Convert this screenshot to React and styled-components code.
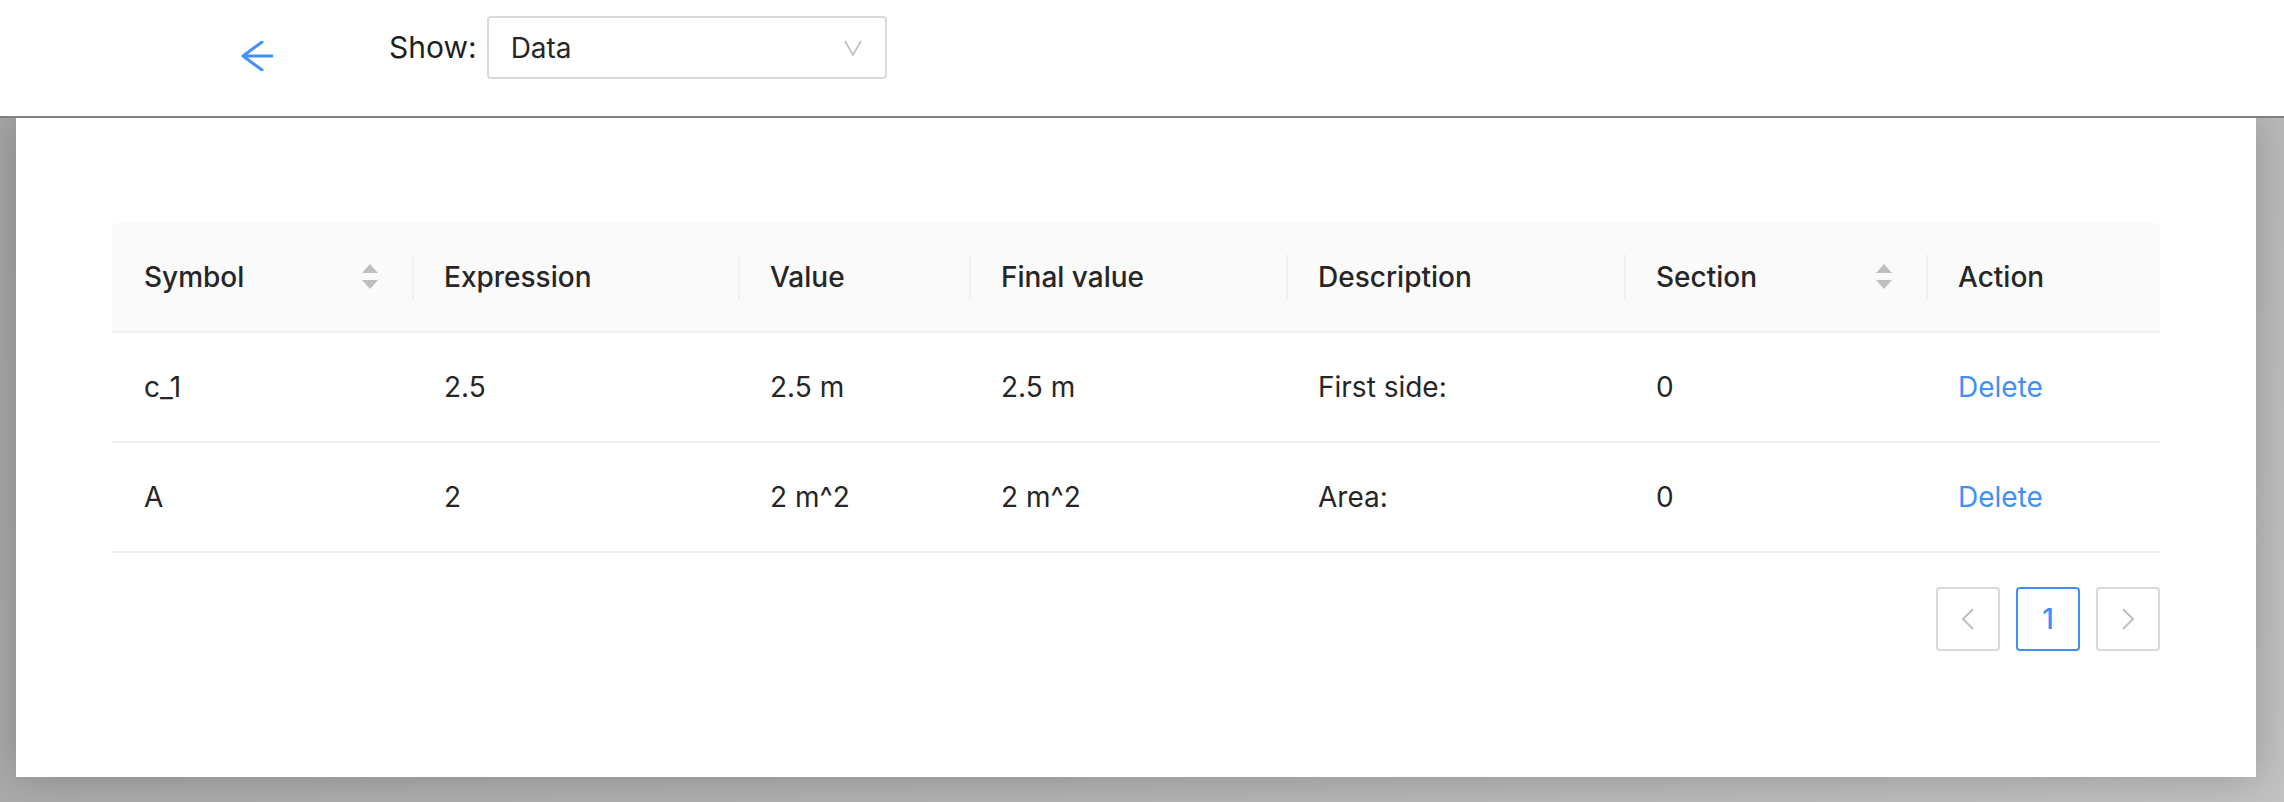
import React from "react";
import styled, { createGlobalStyle } from "styled-components";

const GlobalStyle = createGlobalStyle`
  html, body {
    margin: 0;
    padding: 0;
    height: 100%;
  }

  body {
    font-family: Inter, "Noto Sans", "Liberation Sans", sans-serif;
    color: #262626;
    background: #c4c4c4;
  }

  #root {
    height: 100%;
  }
`;

const BLUE = "#4090f7";

const columns = [
  { key: "symbol", title: "Symbol", width: 300, sortable: true },
  { key: "expression", title: "Expression", width: 326 },
  { key: "value", title: "Value", width: 231 },
  { key: "finalValue", title: "Final value", width: 317 },
  { key: "description", title: "Description", width: 338 },
  { key: "section", title: "Section", width: 302, sortable: true },
  { key: "action", title: "Action", width: 234 },
];

const rows = [
  { symbol: "c_1", expression: "2.5", value: "2.5 m", finalValue: "2.5 m", description: "First side:", section: "0" },
  { symbol: "A", expression: "2", value: "2 m^2", finalValue: "2 m^2", description: "Area:", section: "0" },
];

const ArrowLeft = () => (
  <svg width="32" height="30" viewBox="0 0 32 30" fill="none">
    <path
      d="M31 15H2M21 1L2 15L21 29"
      stroke={BLUE}
      strokeWidth="3"
      strokeLinecap="round"
      strokeLinejoin="round"
    />
  </svg>
);

const ChevronDown = () => (
  <svg width="18" height="16" viewBox="0 0 18 16" fill="none">
    <path d="M1 1L9 15L17 1" stroke="#bfbfbf" strokeWidth="1.6" />
  </svg>
);

const Chevron = ({ dir }) => (
  <svg width="14" height="22" viewBox="0 0 14 22" fill="none">
    <path
      d={dir === "left" ? "M12 1L2 11L12 21" : "M2 1L12 11L2 21"}
      stroke="#bfbfbf"
      strokeWidth="2"
    />
  </svg>
);

const SortCarets = () => (
  <SortIcon viewBox="0 0 16 26" width="16" height="26">
    <path d="M8 0L16 9H0Z" fill="#bfbfbf" />
    <path d="M0 16H16L8 25Z" fill="#bfbfbf" />
  </SortIcon>
);

const App = () => {
  return (
    <>
      <GlobalStyle />
      <Page>
        <Header>
          <BackButton type="button" aria-label="Back">
            <ArrowLeft />
          </BackButton>
          <ShowLabel>Show:</ShowLabel>
          <Select>
            <span>Data</span>
            <ChevronDown />
          </Select>
        </Header>

        <Body>
          <Card>
            <Table>
              <colgroup>
                {columns.map((c) => (
                  <col key={c.key} style={{ width: c.width }} />
                ))}
              </colgroup>
              <thead>
                <tr>
                  {columns.map((c, i) => (
                    <Th key={c.key} divided={i > 0}>
                      <HeadInner>
                        <span>{c.title}</span>
                        {c.sortable && <SortCarets />}
                      </HeadInner>
                    </Th>
                  ))}
                </tr>
              </thead>
              <tbody>
                {rows.map((r) => (
                  <tr key={r.symbol}>
                    {columns.map((c) => (
                      <Td key={c.key}>
                        {c.key === "action" ? <DeleteLink href="#">Delete</DeleteLink> : r[c.key]}
                      </Td>
                    ))}
                  </tr>
                ))}
              </tbody>
            </Table>

            <Pagination>
              <PageItem disabled>
                <Chevron dir="left" />
              </PageItem>
              <PageItem active>1</PageItem>
              <PageItem disabled>
                <Chevron dir="right" />
              </PageItem>
            </Pagination>
          </Card>
        </Body>
      </Page>
    </>
  );
};

const Page = styled.div`
  display: flex;
  flex-direction: column;
  height: 100%;
`;

const Header = styled.header`
  position: relative;
  z-index: 2;
  box-sizing: border-box;
  display: flex;
  align-items: flex-start;
  height: 118px;
  padding: 16px 0 0 241px;
  background: #fff;
  border-bottom: 2px solid #808080;
  flex-shrink: 0;
`;

const BackButton = styled.button`
  display: flex;
  margin: 25px 0 0 0;
  padding: 0;
  border: 0;
  background: none;
  cursor: pointer;
`;

const ShowLabel = styled.label`
  margin-left: 116px;
  margin-right: 10px;
  font-size: 30px;
  line-height: 63px;
  color: #1f1f1f;
`;

const Select = styled.div`
  box-sizing: border-box;
  display: flex;
  align-items: center;
  justify-content: space-between;
  width: 400px;
  height: 63px;
  padding: 0 23px 0 22px;
  border: 2px solid #d9d9d9;
  border-radius: 4px;
  font-size: 28px;
  color: #262626;
`;

const Body = styled.main`
  flex: 1;
  display: flex;
  padding: 0 28px 25px 16px;
  background: linear-gradient(135deg, #a6a6a6 0%, #b4b4b4 60%, #c2c2c2 100%);
`;

const Card = styled.section`
  flex: 1;
  box-sizing: border-box;
  padding: 105px 96px 0;
  background: #fff;
  box-shadow: 0 0 40px rgba(0, 0, 0, 0.22);
`;

const Table = styled.table`
  width: 100%;
  table-layout: fixed;
  border-collapse: collapse;
  font-size: 28px;
`;

const Th = styled.th`
  position: relative;
  height: 108px;
  padding: 0 32px;
  background: #fafafa;
  border-bottom: 2px solid #f0f0f0;
  text-align: left;
  font-weight: 500;
  color: #262626;

  &:first-child {
    border-top-left-radius: 4px;
  }

  &:last-child {
    border-top-right-radius: 4px;
  }

  &::before {
    content: "";
    display: ${(p) => (p.divided ? "block" : "none")};
    position: absolute;
    left: 0;
    top: 50%;
    width: 2px;
    height: 45px;
    background: #f0f0f0;
    transform: translateY(-50%);
  }
`;

const HeadInner = styled.div`
  display: flex;
  align-items: center;
  justify-content: space-between;
`;

const SortIcon = styled.svg`
  flex-shrink: 0;
  margin-right: 2px;
`;

const Td = styled.td`
  height: 108px;
  padding: 0 32px;
  border-bottom: 2px solid #f0f0f0;
  color: #262626;
  white-space: nowrap;
`;

const DeleteLink = styled.a`
  color: ${BLUE};
  text-decoration: none;
`;

const Pagination = styled.nav`
  display: flex;
  justify-content: flex-end;
  gap: 16px;
  margin-top: 34px;
`;

const PageItem = styled.button`
  box-sizing: border-box;
  display: flex;
  align-items: center;
  justify-content: center;
  width: 64px;
  height: 64px;
  padding: 0;
  border: 2px solid ${(p) => (p.active ? BLUE : "#d9d9d9")};
  border-radius: 4px;
  background: #fff;
  font-family: inherit;
  font-size: 28px;
  font-weight: 500;
  color: ${(p) => (p.active ? BLUE : "#bfbfbf")};
  cursor: ${(p) => (p.disabled ? "not-allowed" : "pointer")};
`;

export default App;
